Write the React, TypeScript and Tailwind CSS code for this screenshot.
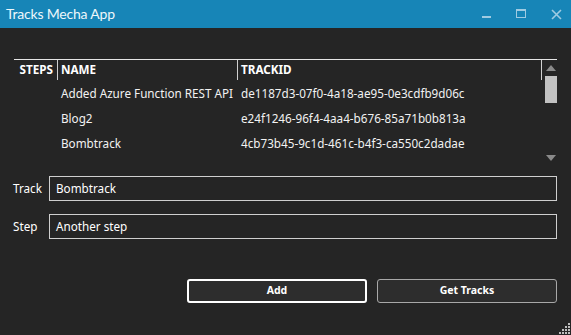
import React from 'react';

const TRACKS = [
  { name: 'Added Azure Function REST API', id: 'de1187d3-07f0-4a18-ae95-0e3cdfb9d06c' },
  { name: 'Blog2', id: 'e24f1246-96f4-4aa4-b676-85a71b0b813a' },
  { name: 'Bombtrack', id: '4cb73b45-9c1d-461c-b4f3-ca550c2dadae' },
];

function TitleButtons() {
  return (
    <div className="flex items-center h-full pr-[9px]">
      <div className="w-[34px] h-full flex items-center justify-center">
        <svg width="10" height="10" viewBox="0 0 10 10">
          <rect x="0" y="7" width="9" height="2" fill="#9fcbe2" />
        </svg>
      </div>
      <div className="w-[34px] h-full flex items-center justify-center">
        <svg width="10" height="10" viewBox="0 0 10 10">
          <rect x="0.5" y="0.5" width="9" height="8" fill="none" stroke="#9fcbe2" />
          <rect x="0" y="0" width="10" height="2" fill="#9fcbe2" />
        </svg>
      </div>
      <div className="w-[24px] h-full flex items-center justify-end">
        <svg width="11" height="11" viewBox="0 0 11 11">
          <path d="M1 1 L10 10 M10 1 L1 10" stroke="#9fcbe2" strokeWidth="1.6" />
        </svg>
      </div>
    </div>
  );
}

function ResizeGrip() {
  const dots: [number, number][] = [];
  for (let r = 0; r < 4; r++) {
    for (let c = 3 - r; c < 4; c++) dots.push([c * 3, r * 3]);
  }
  return (
    <svg className="absolute right-[1px] bottom-[1px]" width="11" height="11" viewBox="0 0 11 11">
      {dots.map(([x, y], i) => (
        <rect key={i} x={x} y={y} width="2" height="2" fill="#bdbdbd" />
      ))}
    </svg>
  );
}

export default function App() {
  return (
    <div
      className="w-[571px] h-[335px] bg-[#252525] flex flex-col relative overflow-hidden text-white text-[11.7px]"
      style={{ fontFamily: '"Noto Sans", "Open Sans", sans-serif' }}
    >
      <div className="h-[28px] bg-[#1785b7] flex items-center justify-between shrink-0">
        <span
          className="pl-[6px] text-[14px] tracking-[-0.2px] text-[#eef7fb] leading-none"
          style={{ fontFamily: 'Lato, "Noto Sans", sans-serif' }}
        >
          Tracks Mecha App
        </span>
        <TitleButtons />
      </div>

      <div className="px-[14px] pt-[31px] flex flex-col">
        {/* track list */}
        <div className="flex border-t border-[#e6e6e6] h-[104px]">
          <div className="w-[528px] flex flex-col">
            <div className="grid grid-cols-[43px_180px_239px_66px] h-[20px] font-bold leading-none">
              <div className="flex items-center justify-end pr-[4px]">STEPS</div>
              <div className="flex items-center border-l border-[#d0d0d0] pl-[3px]">NAME</div>
              <div className="flex items-center border-l border-[#d0d0d0] pl-[3px]">TRACKID</div>
              <div className="border-r border-[#d0d0d0]" />
            </div>
            {TRACKS.map(t => (
              <div key={t.id} className="grid grid-cols-[43px_180px_239px_66px] h-[25px] pt-[2px] leading-none text-[#f2f2f2]">
                <div />
                <div className="flex items-center pl-[4px] whitespace-nowrap">{t.name}</div>
                <div className="flex items-center pl-[4px] whitespace-nowrap">{t.id}</div>
                <div />
              </div>
            ))}
          </div>
          <div className="w-[15px] flex flex-col items-center pt-[5px] pl-[2px]">
            <svg width="10" height="6" viewBox="0 0 10 6">
              <path d="M0 6 L5 0 L10 6 Z" fill="#8a8a8a" />
            </svg>
            <div className="w-[12px] h-[27px] bg-[#c2c2c2] mt-[5px]" />
            <div className="flex-1" />
            <svg width="10" height="6" viewBox="0 0 10 6" className="mb-[2px]">
              <path d="M0 0 L10 0 L5 6 Z" fill="#8a8a8a" />
            </svg>
          </div>
        </div>

        {/* inputs */}
        <div className="flex flex-col gap-[13px] mt-[13px]">
          <div className="flex items-center">
            <span className="w-[36px] -ml-[1px]">Track</span>
            <div className="flex-1 h-[25px] border border-[#cfcfcf] flex items-center pl-[6px]">Bombtrack</div>
          </div>
          <div className="flex items-center">
            <span className="w-[36px] -ml-[1px]">Step</span>
            <div className="flex-1 h-[25px] border border-[#cfcfcf] flex items-center pl-[6px]">Another step</div>
          </div>
        </div>

        {/* buttons */}
        <div className="flex justify-end gap-[10px] mt-[40px]">
          <button className="w-[180px] h-[24px] rounded-[3px] border-2 border-white bg-[#2d2d2d] text-[10.5px] font-bold text-white">
            Add
          </button>
          <button className="w-[180px] h-[24px] rounded-[3px] border border-[#a8a8a8] bg-[#2d2d2d] text-[10.5px] font-bold text-white">
            Get Tracks
          </button>
        </div>
      </div>

      <ResizeGrip />
    </div>
  );
}
